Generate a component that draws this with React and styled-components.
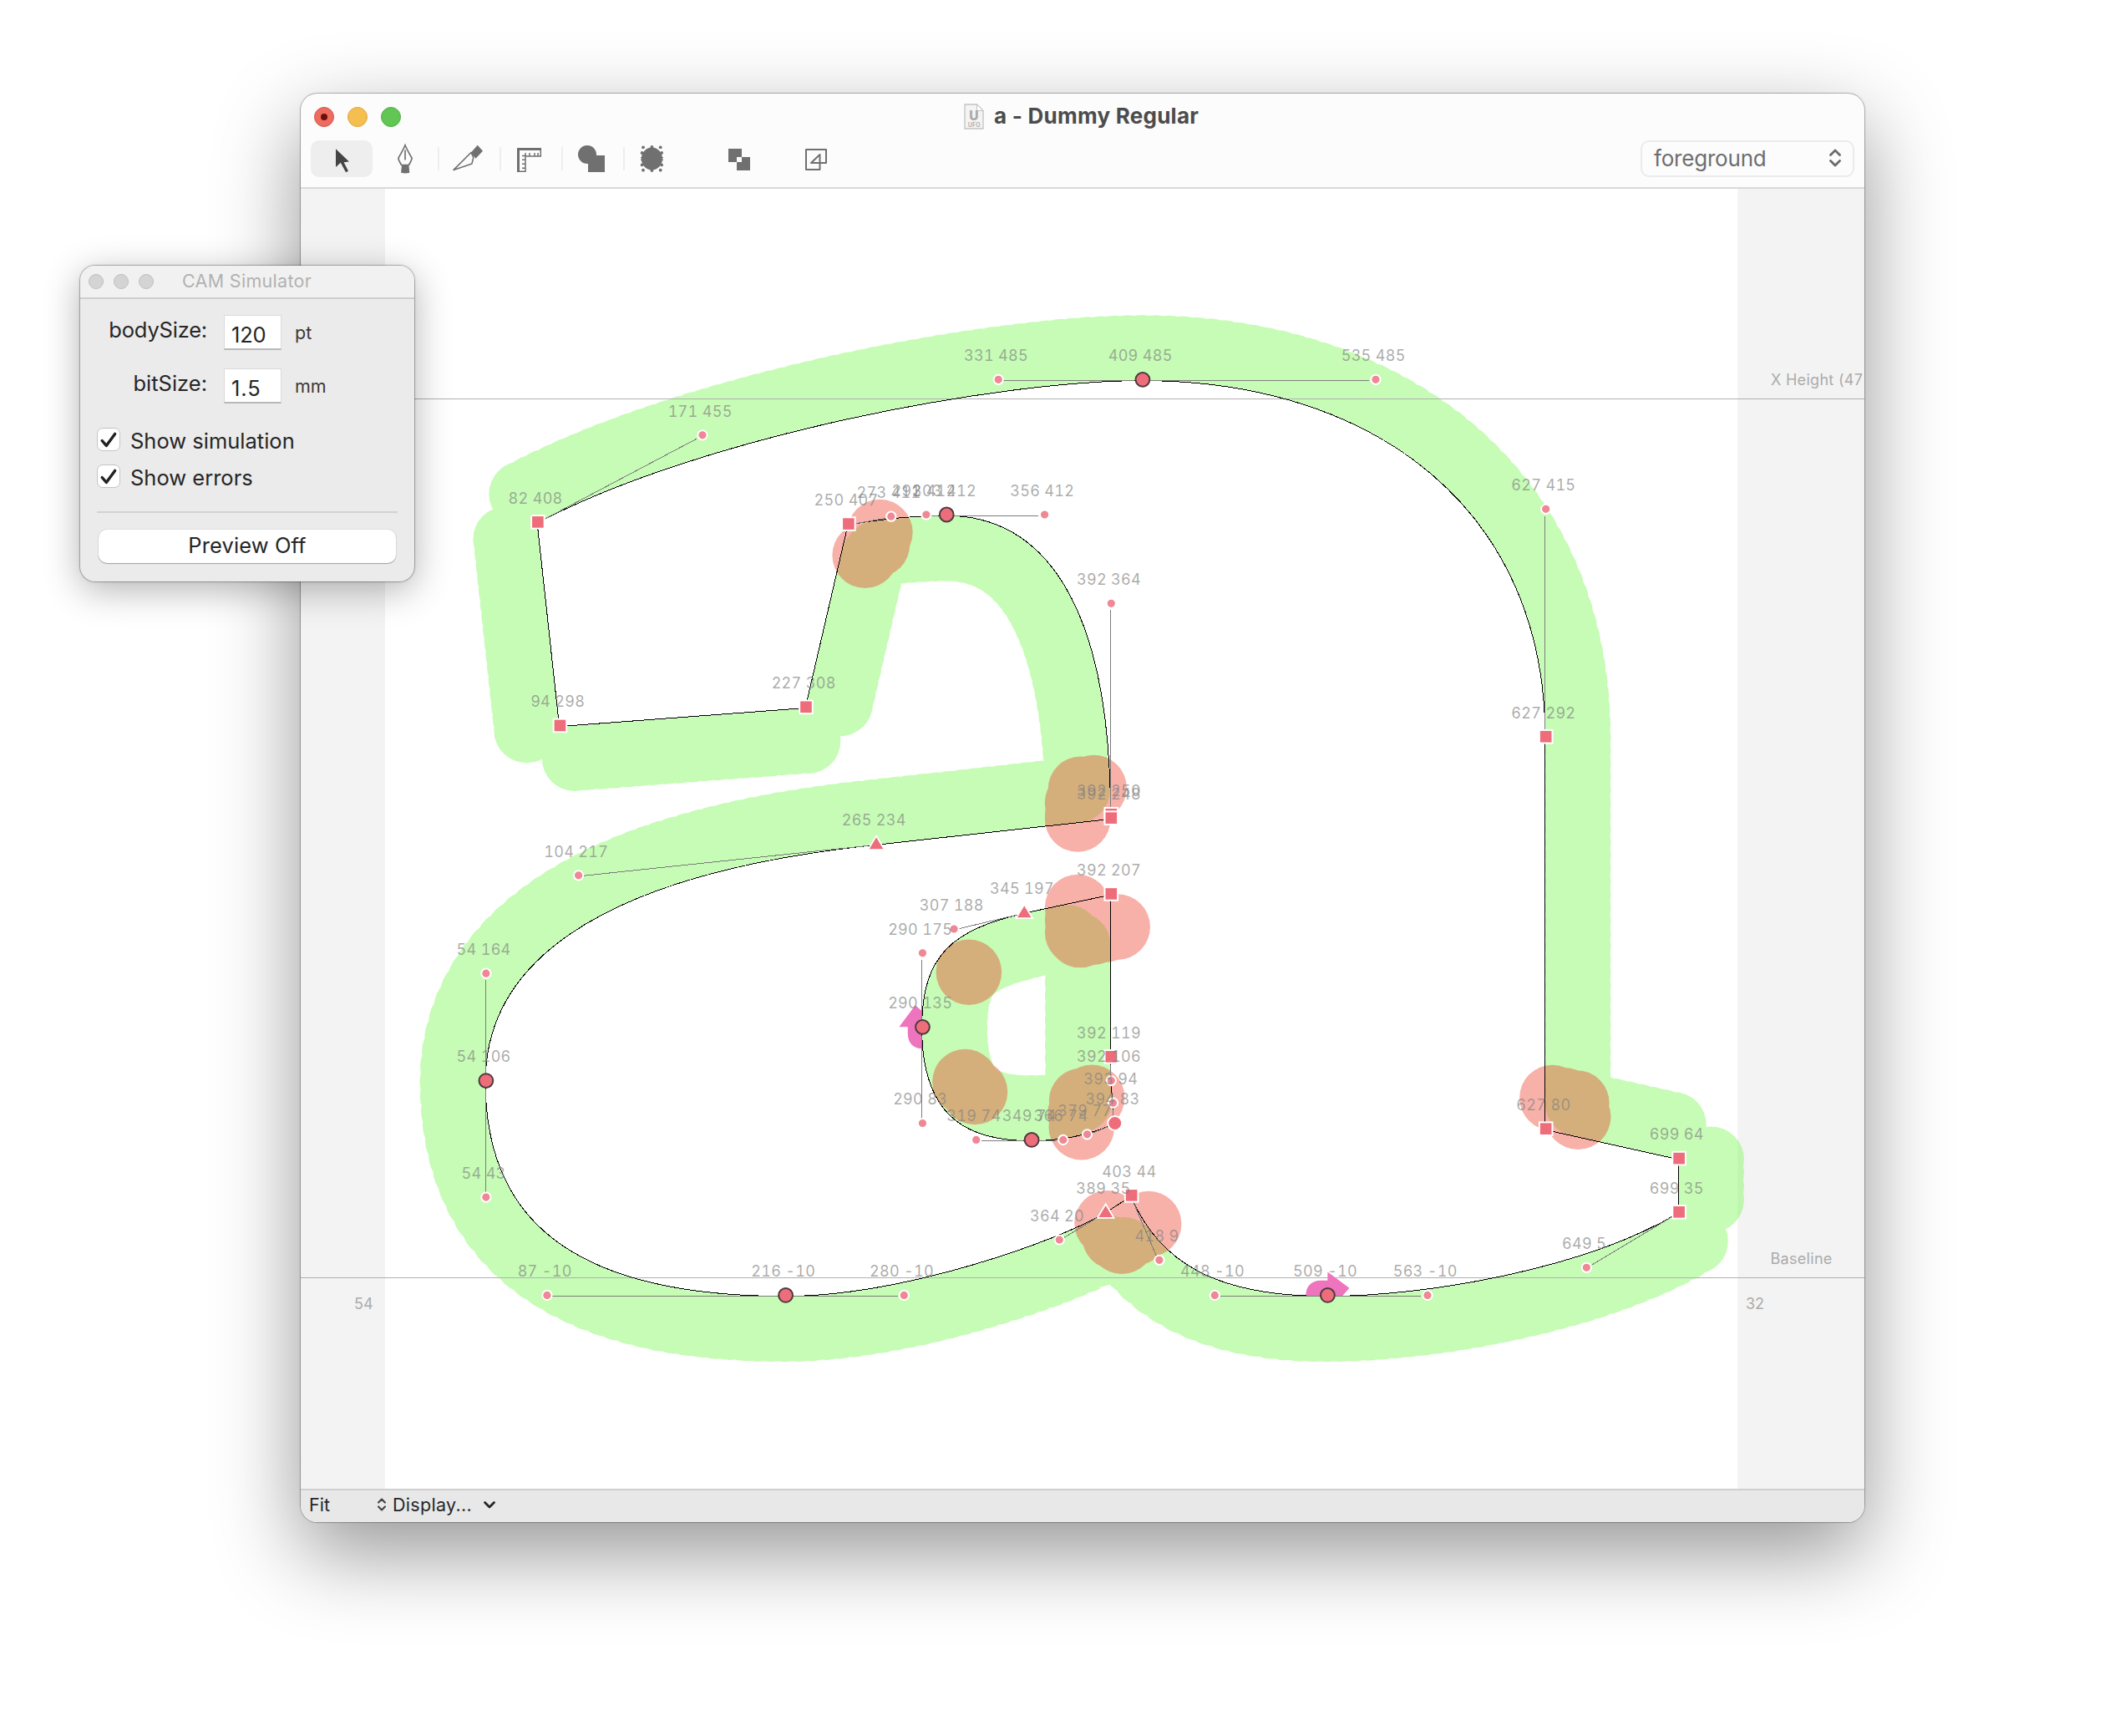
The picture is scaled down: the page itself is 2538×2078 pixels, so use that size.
import React from "react";
import styled, { createGlobalStyle } from "styled-components";

/* ---------- glyph data (font units) ---------- */

const SCALE = 2.2143;
const ORIGIN_X = 461.5;
const ORIGIN_Y = 1529.5;
const BIT_RADIUS = 17.75;
const STEP = 7;

const px = (x) => ORIGIN_X + x * SCALE;
const py = (y) => ORIGIN_Y - y * SCALE;

const OUTER = [
  [[82, 408], [171, 455], [331, 485], [409, 485]],
  [[409, 485], [535, 485], [627, 415], [627, 292]],
  [[627, 292], [627, 80]],
  [[627, 80], [699, 64]],
  [[699, 64], [699, 35]],
  [[699, 35], [649, 5], [563, -10], [509, -10]],
  [[509, -10], [448, -10], [418, 9], [403, 44]],
  [[403, 44], [389, 35]],
  [[389, 35], [364, 20], [280, -10], [216, -10]],
  [[216, -10], [87, -10], [54, 43], [54, 106]],
  [[54, 106], [54, 164], [104, 217], [265, 234]],
  [[265, 234], [392, 248]],
  [[392, 248], [392, 250]],
  [[392, 250], [392, 364], [356, 412], [303, 412]],
  [[303, 412], [292, 412], [273, 411], [250, 407]],
  [[250, 407], [227, 308]],
  [[227, 308], [94, 298]],
  [[94, 298], [82, 408]],
];

const INNER = [
  [[392, 207], [345, 197]],
  [[345, 197], [307, 188], [290, 175], [290, 135]],
  [[290, 135], [290, 83], [319, 74], [349, 74]],
  [[349, 74], [366, 74], [379, 77], [394, 83]],
  [[394, 83], [393, 94], [392, 106], [392, 119]],
  [[392, 119], [392, 207]],
];

const SEGMENTS = [...OUTER, ...INNER];

const SQUARES = [
  [82, 408], [627, 292], [627, 80], [699, 64], [699, 35], [403, 44],
  [392, 250], [392, 248], [250, 407], [227, 308], [94, 298],
  [392, 207], [392, 119],
];
const TANGENTS = [[389, 35], [265, 234], [345, 197]];
const SMOOTH = [
  [409, 485], [509, -10], [216, -10], [54, 106], [303, 412], [290, 135], [349, 74],
];
const CURVES = [[394, 83]];

/* ---------- milling simulation ---------- */

function pointAt(seg, t) {
  const u = 1 - t;
  if (seg.length === 2) {
    return [seg[0][0] * u + seg[1][0] * t, seg[0][1] * u + seg[1][1] * t];
  }
  const k = [u * u * u, 3 * u * u * t, 3 * u * t * t, t * t * t];
  return [0, 1].map((a) => seg.reduce((sum, p, i) => sum + p[a] * k[i], 0));
}

function directionAt(seg, t) {
  const u = 1 - t;
  let d;
  if (seg.length === 2) {
    d = [seg[1][0] - seg[0][0], seg[1][1] - seg[0][1]];
  } else {
    const k = [u * u, 2 * u * t, t * t];
    d = [0, 1].map((a) =>
      k.reduce((sum, w, i) => sum + w * (seg[i + 1][a] - seg[i][a]), 0)
    );
  }
  const len = Math.hypot(d[0], d[1]) || 1;
  return [d[0] / len, d[1] / len];
}

const FLATNESS = 200;

function arcTable(seg) {
  const table = [0];
  let prev = seg[0];
  for (let i = 1; i <= FLATNESS; i++) {
    const p = pointAt(seg, i / FLATNESS);
    table.push(table[i - 1] + Math.hypot(p[0] - prev[0], p[1] - prev[1]));
    prev = p;
  }
  return table;
}

// Parameters that cut a segment into n pieces of equal length.
function evenParams(table, n) {
  const total = table[FLATNESS];
  return Array.from({ length: n }, (_, i) => {
    const target = (total * i) / n;
    let j = 0;
    while (j < FLATNESS - 1 && table[j + 1] < target) j++;
    const span = table[j + 1] - table[j] || 1;
    return (j + (target - table[j]) / span) / FLATNESS;
  });
}

const OUTLINE_SAMPLES = SEGMENTS.flatMap((seg) => {
  const n = Math.max(2, Math.ceil(arcTable(seg)[FLATNESS]));
  return Array.from({ length: n }, (_, i) => pointAt(seg, i / n));
});

// Cutter positions that graze the tight bends of the counter.
const GRAZES = [
  [315.4, 165.2],
  [313.4, 105.900],
  [318.6, 100.5],
];

function simulate() {
  const clean = [];
  const errors = [...GRAZES];
  SEGMENTS.forEach((seg) => {
    const table = arcTable(seg);
    const n = Math.max(1, Math.round(table[FLATNESS] / STEP));
    evenParams(table, n).forEach((t) => {
      const [x, y] = pointAt(seg, t);
      const [dx, dy] = directionAt(seg, t);
      const c = [x - dy * BIT_RADIUS, y + dx * BIT_RADIUS];
      const nearest = OUTLINE_SAMPLES.reduce(
        (m, p) => Math.min(m, Math.hypot(p[0] - c[0], p[1] - c[1])),
        Infinity
      );
      (nearest < BIT_RADIUS - 0.3 ? errors : clean).push(c);
    });
  });
  return { clean, errors };
}

const R = BIT_RADIUS * SCALE;
const circlesPath = (centers) =>
  centers
    .map(([x, y]) => {
      const cx = px(x).toFixed(2);
      const cy = py(y).toFixed(2);
      return `M${cx} ${cy}m${-R} 0a${R} ${R} 0 1 1 ${2 * R} 0a${R} ${R} 0 1 1 ${-2 * R} 0z`;
    })
    .join("");

const SIMULATION = simulate();

const contourPath = (segs) =>
  segs
    .map((seg, i) => {
      const pts = seg.map(([x, y]) => `${px(x).toFixed(1)} ${py(y).toFixed(1)}`);
      const head = i === 0 ? `M${pts[0]}` : "";
      return head + (seg.length === 2 ? "L" : "C") + pts.slice(1).join(" ");
    })
    .join("") + "Z";

const GLYPH = contourPath(OUTER) + contourPath(INNER);

const HANDLES = SEGMENTS.filter((s) => s.length === 4).flatMap((s) => [
  [s[0], s[1]],
  [s[3], s[2]],
]);

const ALL_LABELS = [
  ...SQUARES, ...TANGENTS, ...SMOOTH, ...CURVES, ...HANDLES.map((h) => h[1]),
];

/* ---------- page ---------- */

const Global = createGlobalStyle`
  body { margin: 0; background: #fff; }
  * { box-sizing: border-box; }
`;

const Desktop = styled.div`
  position: relative;
  width: 2538px;
  height: 2078px;
  overflow: hidden;
  background: #fff;
  font-family: Inter, "Liberation Sans", sans-serif;
`;

const EditorWindow = styled.section`
  position: absolute;
  left: 360px;
  top: 112px;
  width: 1872px;
  height: 1710px;
  display: flex;
  flex-direction: column;
  border-radius: 20px;
  background: #fcfcfc;
  box-shadow: 0 0 0 1px rgba(0, 0, 0, 0.25), 0 0 4px rgba(0, 0, 0, 0.06),
    0 36px 100px rgba(0, 0, 0, 0.42);
`;

const Header = styled.header`
  height: 114px;
  flex: none;
  border-bottom: 2px solid #d9d9d9;
  display: flex;
  flex-direction: column;
`;

const TitleBar = styled.div`
  height: 56px;
  display: grid;
  grid-template-columns: 130px 1fr 130px;
  align-items: center;
`;

const Lights = styled.div`
  display: flex;
  gap: ${(p) => p.$gap}px;
  padding-left: ${(p) => p.$pad}px;
`;

const Light = styled.span`
  width: ${(p) => p.$size}px;
  height: ${(p) => p.$size}px;
  border-radius: 50%;
  background: ${(p) => p.$fill};
  border: 1px solid ${(p) => p.$edge};
  display: flex;
  align-items: center;
  justify-content: center;
`;

const Unsaved = styled.i`
  width: 8px;
  height: 8px;
  border-radius: 50%;
  background: #6c100a;
`;

const WindowTitle = styled.h1`
  margin: 0 3px 2px 0;
  display: flex;
  align-items: center;
  justify-content: center;
  gap: 12px;
  font-size: 26px;
  font-weight: 700;
  line-height: 30px;
  letter-spacing: 0.25px;
  color: #4c4c4c;
`;

const Tools = styled.nav`
  height: 44px;
  display: flex;
  padding: 0 12px;
`;

const Tool = styled.button`
  width: ${(p) => p.$w || 72}px;
  height: 44px;
  padding: 0;
  border: 0;
  border-radius: 10px;
  background: ${(p) => (p.$active ? "#eeeeee" : "transparent")};
  svg { display: block; }
`;

const ToolRule = styled.span`
  width: 2px;
  height: 28px;
  margin-top: 8px;
  background: #eeeeee;
`;

const SmallTool = styled(Tool)`
  width: 26px;
  margin-left: ${(p) => p.$gap}px;
`;

const LayerSelect = styled.div`
  width: 256px;
  height: 44px;
  margin-left: auto;
  padding: 0 14px 2px 14px;
  display: flex;
  align-items: center;
  justify-content: space-between;
  border: 2px solid #ebebeb;
  border-radius: 10px;
  font-size: 26px;
  font-weight: 400;
  color: #6e6e6e;
  letter-spacing: ${(p) => p.$track}px;
`;

const Canvas = styled.main`
  height: 1556px;
  flex: none;
  overflow: hidden;
  svg { display: block; }
  text {
    font-family: Inter, "Liberation Sans", sans-serif;
    font-size: 18px;
    font-weight: 400;
  }
`;

const StatusBar = styled.footer`
  height: 40px;
  flex: none;
  display: flex;
  align-items: center;
  padding: 0 10px 4px;
  background: #e8e8e8;
  border-top: 2px solid #cfcfcf;
  border-radius: 0 0 20px 20px;
  font-size: 21.5px;
  color: #262626;
`;

const ZoomLevel = styled.span`
  width: 82px;
  letter-spacing: 0px;
`;

const DisplayMenu = styled.span`
  width: 108px;
  margin-left: 8px;
  letter-spacing: 0.3px;
`;

const Panel = styled.section`
  position: absolute;
  left: 96px;
  top: 318px;
  width: 400px;
  height: 378px;
  display: flex;
  flex-direction: column;
  border-radius: 18px;
  background: #ebebeb;
  box-shadow: 0 0 0 1px rgba(0, 0, 0, 0.24), 0 0 4px rgba(0, 0, 0, 0.12),
    0 10px 44px rgba(0, 0, 0, 0.3);
`;

const PanelTitle = styled.header`
  height: 40px;
  flex: none;
  display: flex;
  align-items: center;
  background: #f1f1f1;
  border-bottom: 2px solid #cfcfcf;
  border-radius: 18px 18px 0 0;
  font-size: 21.5px;
  color: #b1b1b1;
  letter-spacing: 0.3px;
`;

const PanelCaption = styled.span`
  margin-left: 34px;
  margin-top: -2px;
`;

const PanelBody = styled.div`
  flex: 1;
  display: flex;
  flex-direction: column;
  padding: 19px 20px 0;
`;

const Field = styled.label`
  height: 64px;
  display: flex;
  align-items: flex-start;
`;

const FieldName = styled.span`
  width: 132px;
  text-align: right;
  font-size: 25.5px;
  line-height: 36px;
  color: #262626;
  letter-spacing: ${(p) => p.$track || 0}px;
`;

const FieldInput = styled.span`
  width: 69px;
  height: 42px;
  margin-left: 20px;
  padding: 5px 0 0 8px;
  background: #fff;
  border: 1px solid #dadada;
  border-bottom: 2px solid #b8b8b8;
  font-size: 25.5px;
  line-height: 36px;
  color: #262626;
  letter-spacing: ${(p) => p.$track}px;
`;

const FieldUnit = styled.span`
  margin-left: 16px;
  font-size: 21.5px;
  line-height: 42px;
  color: #3a3a3a;
`;

const CheckRow = styled.label`
  height: 44px;
  display: flex;
  align-items: flex-start;
  gap: 12px;
  font-size: 25.5px;
  line-height: 32px;
  color: #262626;
  letter-spacing: 0;
`;

const Checks = styled.div`
  margin-top: 7px;
`;

const CheckBox = styled.span`
  width: 28px;
  height: 28px;
  border-radius: 7px;
  background: #fff;
  border: 1px solid #c4c4c4;
  svg { display: block; }
`;

const Rule = styled.hr`
  width: 360px;
  height: 2px;
  margin: 12px 0 20px;
  border: 0;
  background: #d3d3d3;
`;

const PreviewButton = styled.button`
  width: 356px;
  height: 40px;
  margin: 0 0 0 2px;
  padding: 0 0 3px;
  border: 0;
  border-radius: 10px;
  background: #fff;
  box-shadow: 0 1px 1px rgba(0, 0, 0, 0.28), 0 0 0 1px rgba(0, 0, 0, 0.05);
  font-family: inherit;
  font-size: 25.5px;
  color: #262626;
  letter-spacing: 0.1px;
`;

/* ---------- icons ---------- */

const INK = "#707070";

const PointerIcon = () => (
  <svg width="74" height="44" fill="#444">
    <path d="M30 10.3V32l5.8-5.2L42 38.2l3-1.5-5.4-10.4 6.3-.9z" />
  </svg>
);

const PenIcon = () => (
  <svg width="78" height="44" fill="none" stroke={INK} strokeWidth="1.7">
    <path d="M39 5.8C37 11 33 17.5 30.9 21.3c.4 3.4 2.4 5.5 3.6 8.2h9c1.2-2.7 3.2-4.8 3.6-8.2C45 17.5 41 11 39 5.8z" />
    <path d="M39 11.5V23.5" />
    <path d="M35 29.5h8.4l.9 9.3q-5 1.300-10.2 0z" fill={INK} stroke="none" />
  </svg>
);

const KnifeIcon = () => (
  <svg width="72" height="44" fill="none" stroke={INK} strokeWidth="1.6">
    <path d="M17 35.4 38 14.5l2.8 6-1.9 7.6z" strokeLinejoin="round" />
    <path d="M45.7 5.7 52 12.7 43.5 21.7 37.7 14.8z" fill={INK} stroke="none" />
  </svg>
);

const RulerIcon = () => (
  <svg width="72" height="44" fill="none" stroke={INK} strokeWidth="1.5">
    <path d="M19 9H48V12H22V38H19z" fill={INK} stroke="none" />
    <path d="M47.3 10V19H29V37.3H20M25 23.3h4M25 28.3h4M25 33.3h4M25 18.5h5M29 15v5M34 15v4M40 15v4M44 15v4" />
  </svg>
);

const ShapeIcon = () => (
  <svg width="72" height="44" fill={INK}>
    <circle cx="29" cy="17" r="11" />
    <rect x="30" y="18" width="20" height="20" />
  </svg>
);

const BlobIcon = () => (
  <svg width="72" height="44" fill={INK}>
    <ellipse cx="32.4" cy="22" rx="12.6" ry="13.4" />
    {[
      [22, 8.3], [42.7, 8.3], [22, 35.7], [42.7, 35.7], [32.4, 8], [32.4, 36],
      [20.6, 15], [44.1, 15], [20.6, 29.4], [44.1, 29.4],
    ].map(([x, y]) => (
      <circle key={`${x}-${y}`} cx={x} cy={y} r="1.9" />
    ))}
    <path d="M19 20h27v1.2H19zM19 22.8h27V24H19z" />
  </svg>
);

const OverlapIcon = () => (
  <svg width="26" height="44" fill={INK}>
    <path d="M0 10H16V26H0zM10 20H26V36H10z" fillRule="evenodd" />
  </svg>
);

const FourIcon = () => (
  <svg width="26" height="44" fill="none" stroke={INK} strokeWidth="2" strokeLinejoin="round">
    <path d="M1 11H25V27H7L17.5 17V35H1z" />
  </svg>
);

const UpDown = ({ w, h, color, stroke }) => (
  <svg width={w} height={h} viewBox="0 0 14 22" fill="none" stroke={color} strokeWidth={stroke} strokeLinecap="round" strokeLinejoin="round">
    <path d="M1.5 7.5 7 2l5.5 5.5M1.5 14.5 7 20l5.5-5.5" />
  </svg>
);

const FileBadge = () => (
  <svg width="24" height="31" viewBox="0 0 24 31">
    <path d="M1 1H15.5L23 8.5V30H1z" fill="#f4f4f4" stroke="#c2c2c2" strokeWidth="1.3" />
    <path d="M15.5 1V8.5H23z" fill="#fff" stroke="#c2c2c2" />
    <text x="12" y="19.5" textAnchor="middle" fontSize="15.5" fontWeight="800" fill="#a9a9a9" letterSpacing="0">U</text>
    <text x="12.2" y="28" textAnchor="middle" fontSize="7" fontWeight="600" fill="#aaa" letterSpacing="0">UFO</text>
  </svg>
);

const Tick = () => (
  <svg width="26" height="26" fill="none" stroke="#222" strokeWidth="3.4" strokeLinecap="round" strokeLinejoin="round">
    <path d="M5.2 14.5 10.3 20.4 20.6 6.4" />
  </svg>
);

/* ---------- glyph view ---------- */

const ARROW = "M-26 1V0C-26-11-19-17.7-8-17.7H0V-28L26-8.7 17.5 1z";

function trimmed([a, b]) {
  const x1 = px(a[0]);
  const y1 = py(a[1]);
  const x2 = px(b[0]);
  const y2 = py(b[1]);
  const len = Math.hypot(x2 - x1, y2 - y1);
  const k = Math.max(0, (len - 7) / len);
  const s = Math.min(1, 9 / len);
  return {
    x1: x1 + (x2 - x1) * s,
    y1: y1 + (y2 - y1) * s,
    x2: x1 + (x2 - x1) * k,
    y2: y1 + (y2 - y1) * k,
  };
}

function GlyphView() {
  const dot = ([x, y]) => [px(x) + 0.8, py(y) - 1.2];
  return (
    <svg width="1872" height="1556" viewBox="360 226 1872 1556">
      <defs>
        <clipPath id="glyph">
          <path d={GLYPH} clipRule="evenodd" />
        </clipPath>
      </defs>
      <rect x="360" y="226" width="1872" height="1556" fill="#f3f3f3" />
      <rect x="461" y="226" width="1619.3" height="1556" fill="#fff" />

      <path d={circlesPath(SIMULATION.clean)} fill="rgba(112,248,70,0.4)" />
      <path d={circlesPath(SIMULATION.errors)} fill="rgba(235,60,37,0.4)" />

      <g fill="#b0b0b0">
        <rect x="360" y="477" width="1872" height="1" />
        <rect x="360" y="1529" width="1872" height="1" />
      </g>

      <g clipPath="url(#glyph)" fill="#ee74be">
        <path d={ARROW} transform={`translate(${px(509) + 0.8} ${py(-10) - 1.2})`} />
        <path d={ARROW} transform={`translate(${px(290) + 0.8} ${py(135) - 1.2}) rotate(-90)`} />
      </g>

      <path d={GLYPH} fill="none" stroke="#000" strokeWidth="1" shapeRendering="crispEdges" />
      <g stroke="#7c7c7c" strokeWidth="1" shapeRendering="crispEdges">
        {HANDLES.map((h, i) => (
          <line key={i} {...trimmed(h)} />
        ))}
      </g>

      <g fill="#f08794" stroke="#fff" strokeWidth="2">
        {HANDLES.map((h, i) => {
          const [x, y] = dot(h[1]);
          return <circle key={i} cx={x} cy={y} r="5.6" />;
        })}
      </g>
      <g fill="#ee6d7a" stroke="#fff" strokeWidth="2">
        {SQUARES.map((p) => {
          const [x, y] = dot(p);
          return <rect key={p.join()} x={x - 7.8} y={y - 7.8} width="15.6" height="15.6" />;
        })}
        {TANGENTS.map((p) => {
          const [x, y] = dot(p);
          return (
            <path key={p.join()} d={`M${x} ${y - 9.5}l9.8 16.5h-19.6z`} strokeWidth="1.8" />
          );
        })}
        {CURVES.map((p) => {
          const [x, y] = dot(p);
          return <circle key={p.join()} cx={x} cy={y} r="8.5" />;
        })}
      </g>
      <g fill="#ee6d7a" stroke="#4d3a3d" strokeWidth="2">
        {SMOOTH.map((p) => {
          const [x, y] = dot(p);
          return <circle key={p.join()} cx={x} cy={y} r="8.4" />;
        })}
      </g>

      <g fill="rgba(128,128,128,0.66)">
        {ALL_LABELS.map((p, i) => {
          const [x, y] = dot(p);
          return (
            <text
              key={i}
              x={x - 2.8}
              y={y - 22.2}
              textAnchor="middle"
              style={{ fontFeatureSettings: '"tnum"', letterSpacing: "0.3px" }}
            >
              {p[0]} {p[1]}
            </text>
          );
        })}
      </g>
      <g fill="#ababab">
        <text x="2119.5" y="1513.3" letterSpacing="0.3">Baseline</text>
        <text x="2120" y="461" letterSpacing="0.3">X Height (47</text>
        <text x="424" y="1567.3">54</text>
        <text x="2090" y="1567">32</text>
      </g>
    </svg>
  );
}

/* ---------- app ---------- */

export default function App() {
  return (
    <Desktop>
      <Global />
      <EditorWindow>
        <Header>
          <TitleBar>
            <Lights $gap={16} $pad={16}>
              <Light $size={24} $fill="#ed6b5f" $edge="#d9554b"><Unsaved /></Light>
              <Light $size={24} $fill="#f5bf4f" $edge="#dca63f" />
              <Light $size={24} $fill="#62c655" $edge="#53ae43" />
            </Lights>
            <WindowTitle>
              <FileBadge />
              a - Dummy Regular
            </WindowTitle>
          </TitleBar>
          <Tools>
            <Tool $w={74} $active><PointerIcon /></Tool>
            <Tool $w={78}><PenIcon /></Tool>
            <ToolRule />
            <Tool><KnifeIcon /></Tool>
            <ToolRule />
            <Tool><RulerIcon /></Tool>
            <ToolRule />
            <Tool><ShapeIcon /></Tool>
            <ToolRule />
            <Tool><BlobIcon /></Tool>
            <SmallTool $gap={52}><OverlapIcon /></SmallTool>
            <SmallTool $gap={66}><FourIcon /></SmallTool>
            <LayerSelect $track={-0.2}>
              foreground
              <UpDown w={14} h={22} color="#6a6a6a" stroke={2.8} />
            </LayerSelect>
          </Tools>
        </Header>
        <Canvas>
          <GlyphView />
        </Canvas>
        <StatusBar>
          <ZoomLevel>Fit</ZoomLevel>
          <UpDown w={10} h={16} color="#444" stroke={3} />
          <DisplayMenu>Display...</DisplayMenu>
          <svg width="16" height="10" fill="none" stroke="#262626" strokeWidth="2.8" strokeLinecap="round" strokeLinejoin="round">
            <path d="M2.500 2.500 8 8l5.500-5.500" />
          </svg>
        </StatusBar>
      </EditorWindow>

      <Panel>
        <PanelTitle>
          <Lights $gap={12} $pad={10}>
            <Light $size={18} $fill="#d4d4d4" $edge="#bfbfbf" />
            <Light $size={18} $fill="#d4d4d4" $edge="#bfbfbf" />
            <Light $size={18} $fill="#d4d4d4" $edge="#bfbfbf" />
          </Lights>
          <PanelCaption>CAM Simulator</PanelCaption>
        </PanelTitle>
        <PanelBody>
          <Field>
            <FieldName $track={-0.2}>bodySize:</FieldName>
            <FieldInput $track={-0.2}>120</FieldInput>
            <FieldUnit>pt</FieldUnit>
          </Field>
          <Field>
            <FieldName>bitSize:</FieldName>
            <FieldInput $track={0.9}>1.5</FieldInput>
            <FieldUnit>mm</FieldUnit>
          </Field>
          <Checks>
            <CheckRow>
              <CheckBox><Tick /></CheckBox>
              <span>Show simulation</span>
            </CheckRow>
            <CheckRow>
              <CheckBox><Tick /></CheckBox>
              <span>Show errors</span>
            </CheckRow>
          </Checks>
          <Rule />
          <PreviewButton>Preview Off</PreviewButton>
        </PanelBody>
      </Panel>
    </Desktop>
  );
}
